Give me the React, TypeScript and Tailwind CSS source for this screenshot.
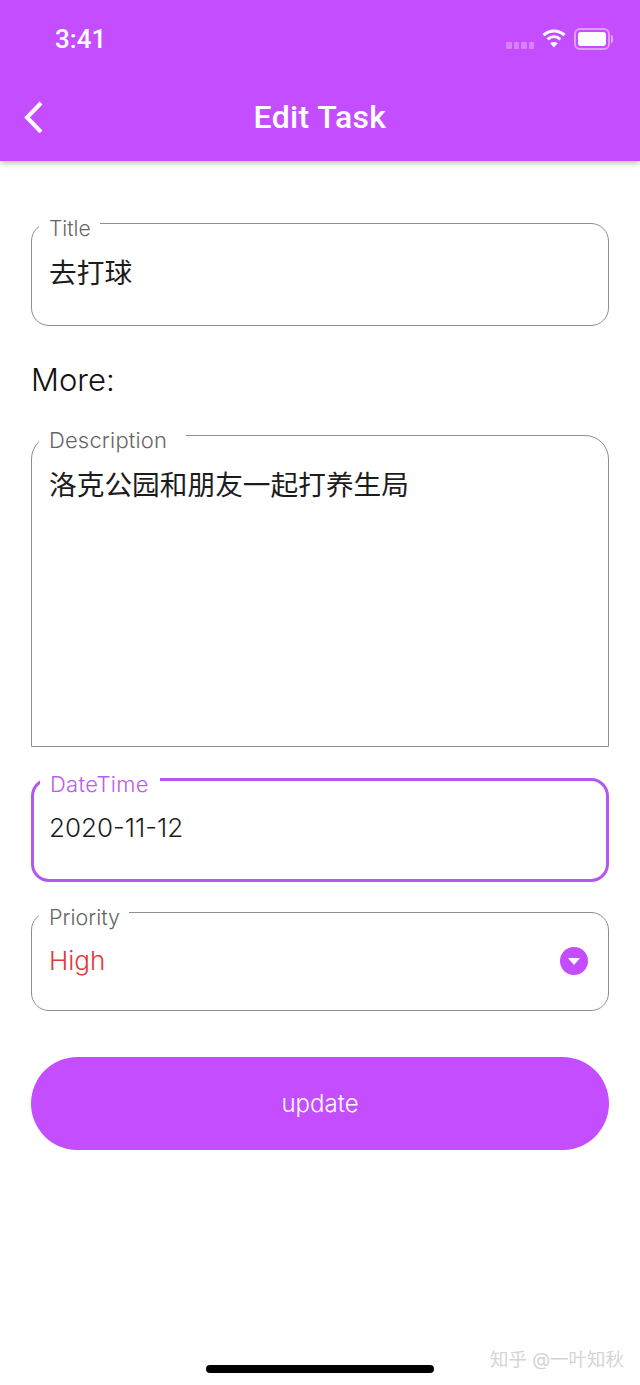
const sans = 'font-["Inter","Noto_Sans_CJK_SC",sans-serif]';

const StatusBar = () => (
    <div className="flex h-[76px] items-center justify-between pl-[55px] pr-[27px] pt-[1px] text-white">
        <span className="font-['Roboto',sans-serif] text-[26px] font-medium leading-none">
            3:41
        </span>
        <div className="flex items-center">
            {/* Barras de sinal apagadas */}
            <div className="mr-[8px] mt-[14px] flex gap-[2px]">
                <span className="h-[7px] w-[5.5px] rounded-[1px] bg-white/30" />
                <span className="h-[7px] w-[5.5px] rounded-[1px] bg-white/30" />
                <span className="h-[7px] w-[5.5px] rounded-[1px] bg-white/30" />
                <span className="h-[7px] w-[5.5px] rounded-[1px] bg-white/30" />
            </div>
            <svg width="24" height="20" viewBox="0 0 24 20" fill="none" className="mr-[8px] mb-[1px]">
                <path d="M1.5 7.2C7.5 1.6 16.5 1.6 22.5 7.2" stroke="white" strokeWidth="3" />
                <path d="M5.6 11.4C9.4 8 14.6 8 18.4 11.4" stroke="white" strokeWidth="3" />
                <path d="M12 19.5L8.2 15.2C10.4 13.5 13.6 13.5 15.8 15.2Z" fill="white" />
            </svg>
            <div className="h-[22px] w-[36px] rounded-[6px] border-2 border-white/45 p-[2px]">
                <div className="h-full w-full rounded-[3px] bg-white" />
            </div>
            <span className="ml-[1px] h-[8px] w-[2px] rounded-r-[2px] bg-white/50" />
        </div>
    </div>
);

const Header = () => (
    <header className="relative flex h-[161px] flex-col bg-[#c44dff] shadow-[0_2px_6px_rgba(0,0,0,0.28)]">
        <StatusBar />
        <div className="relative flex h-[82px] items-center justify-center">
            <svg
                width="20"
                height="32"
                viewBox="0 0 20 32"
                fill="none"
                className="absolute left-[24px] top-[25px]"
            >
                <path d="M17 2L3 16.5L17 31" stroke="white" strokeWidth="4" />
            </svg>
            <h1 className="font-['Roboto',sans-serif] text-[32px] font-medium leading-none tracking-[0.35px] text-white">
                Edit Task
            </h1>
        </div>
    </header>
);

type FieldProps = {
    label: string;
    className: string;
    legendClass: string;
    children: React.ReactNode;
};

const Field = ({ label, className, legendClass, children }: FieldProps) => (
    <fieldset className={`border-[#8e8e8e] ${className}`}>
        <legend className={`translate-y-[5px] font-light leading-[21px] ${legendClass}`}>
            {label}
        </legend>
        {children}
    </fieldset>
);

export default function App() {
    return (
        <div className={`relative flex h-[1385px] flex-col overflow-hidden bg-white ${sans}`}>
            <Header />
            <main className="flex flex-col px-[31px] pt-[52px]">
                <Field
                    label="Title"
                    legendClass="ml-[7px] pl-[10px] pr-[9px] text-[21px] text-[#666666]"
                    className="h-[113px] rounded-[18px] border"
                >
                    <div className="pl-[17px] pt-[19px] text-[27.7px] leading-[40px] text-[#1c1c1c]">去打球</div>
                </Field>

                <p className="mt-[33px] text-[31px] font-light leading-[42px] text-[#111]">More:</p>

                <Field
                    label="Description"
                    legendClass="ml-[7px] pl-[10px] pr-[19px] text-[22px] tracking-[0.15px] text-[#666666]"
                    className="mt-[24px] h-[322px] rounded-t-[24px] border"
                >
                    <div className="pl-[17px] pt-[19px] text-[27.7px] leading-[40px] text-[#1c1c1c]">
                        洛克公园和朋友一起打养生局
                    </div>
                </Field>

                <Field
                    label="DateTime"
                    legendClass="ml-[6px] pl-[10px] pr-[11px] text-[22px] tracking-[0.3px] text-[#b85ee8]"
                    className="mt-[22px] h-[113px] rounded-[18px] border-[3px] !border-[#b457ee]"
                >
                    <div className="pl-[15px] pt-[18px] text-[26px] font-light leading-[40px] text-[#1c1c1c]">
                        2020-11-12
                    </div>
                </Field>

                <Field
                    label="Priority"
                    legendClass="ml-[7px] pl-[10px] pr-[9px] text-[21.5px] text-[#666666]"
                    className="mt-[20px] h-[109px] rounded-[18px] border"
                >
                    <div className="flex items-center justify-between pl-[17px] pr-[20px] pt-[18px]">
                        <span className="text-[26px] font-light leading-[40px] text-[#e03a3a]">High</span>
                        <span className="flex h-[28px] w-[28px] items-center justify-center rounded-full bg-[#c44dff]">
                            <svg width="12" height="7" viewBox="0 0 12 7">
                                <path d="M0 0H12L6 7Z" fill="white" />
                            </svg>
                        </span>
                    </div>
                </Field>

                <button className="mt-[46px] flex h-[93px] items-center justify-center rounded-full bg-[#c44dff] text-[24px] font-light text-white">
                    update
                </button>
            </main>

            <div className="relative mt-auto flex h-[20px] justify-center">
                <span className="h-[8px] w-[228px] rounded-full bg-black" />
                <span className="absolute bottom-[17px] right-[16px] text-[18.5px] leading-none text-[#d4d4d4]">
                    知乎 @一叶知秋
                </span>
            </div>
        </div>
    );
}
